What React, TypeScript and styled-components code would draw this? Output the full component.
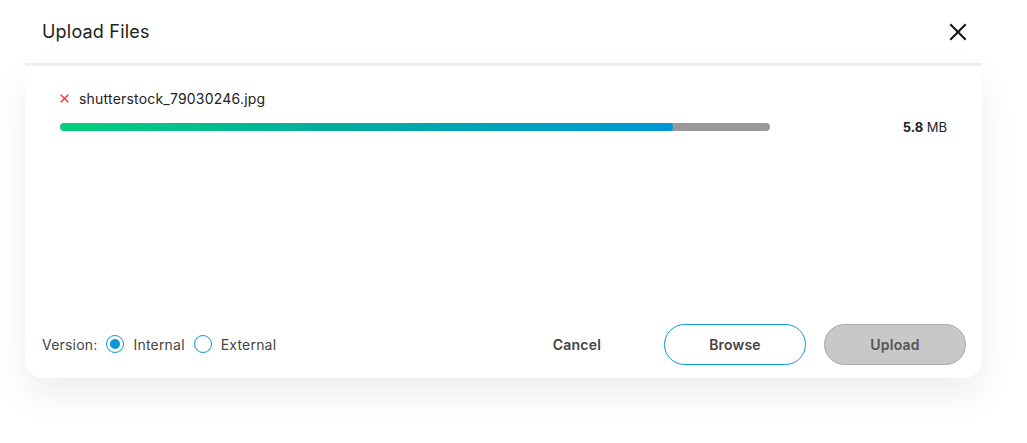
import React from 'react';
import styled, { createGlobalStyle } from 'styled-components';

const GlobalStyle = createGlobalStyle`
  html, body {
    margin: 0;
    padding: 0;
    background: #ffffff;
    font-family: Inter, "Open Sans", sans-serif;
  }
`;

const StyledPage = styled.div`
  width: 1027px;
  height: 443px;
  box-sizing: border-box;
  padding: 0 45px 0 25px;
  overflow: hidden;
`;

const StyledHeader = styled.div`
  height: 63px;
  display: flex;
  align-items: center;
  justify-content: space-between;
  padding: 0 15px 0 17px;
`;

const StyledTitle = styled.h1`
  margin: 0;
  font-size: 18px;
  font-weight: 400;
  color: #222222;
  letter-spacing: 0.2px;
`;

const StyledClose = styled.button`
  width: 18px;
  height: 18px;
  padding: 0;
  border: none;
  background: none;
  display: flex;
  cursor: pointer;
`;

const StyledCard = styled.div`
  height: 315px;
  box-sizing: border-box;
  border-top: 3px solid #eeeeee;
  border-radius: 0 0 18px 18px;
  background: #ffffff;
  box-shadow: 0 18px 36px rgba(0, 0, 0, 0.07);
  display: flex;
  flex-direction: column;
`;

const StyledFileList = styled.div`
  flex: 1;
  padding: 23px 35px 0 35px;
`;

const StyledFileName = styled.div`
  display: flex;
  align-items: center;
  gap: 10px;
  font-size: 14px;
  letter-spacing: 0.2px;
  color: #222222;
  height: 18px;
`;

const StyledProgressRow = styled.div`
  display: flex;
  align-items: center;
  justify-content: space-between;
  margin-top: 12px;
`;

const StyledTrack = styled.div`
  width: 710px;
  height: 8px;
  border-radius: 4px;
  background: #999999;
  overflow: hidden;
`;

const StyledFill = styled.div`
  height: 100%;
  border-radius: 4px;
  background: linear-gradient(90deg, #06cf7c 0%, #03ad9e 45%, #0097d8 100%);
`;

const StyledSize = styled.div`
  font-size: 13px;
  color: #222222;

  strong {
    font-weight: 700;
  }
`;

const StyledFooter = styled.div`
  height: 68px;
  display: flex;
  align-items: center;
  padding: 0 16px 0 17px;
`;

const StyledVersion = styled.div`
  display: flex;
  align-items: center;
  font-size: 14px;
  letter-spacing: 0.2px;
  color: #444444;
  flex: 1;
`;

const StyledRadioLabel = styled.label`
  display: flex;
  align-items: center;
  gap: 9px;
  margin-left: 9px;
  cursor: pointer;
`;

const StyledRadio = styled.span<{ $checked?: boolean }>`
  width: 18px;
  height: 18px;
  box-sizing: border-box;
  border: 1.5px solid #0b98d8;
  border-radius: 50%;
  display: flex;
  align-items: center;
  justify-content: center;

  &::after {
    content: '';
    width: 10px;
    height: 10px;
    border-radius: 50%;
    background: ${({ $checked }) => ($checked ? '#0b98d8' : 'transparent')};
  }
`;

const StyledCancel = styled.button`
  border: none;
  background: none;
  font-family: inherit;
  font-size: 14px;
  font-weight: 600;
  letter-spacing: 0.2px;
  color: #444444;
  padding: 0;
  margin-right: 63px;
  cursor: pointer;
`;

const StyledButton = styled.button<{ $primary?: boolean }>`
  width: 142px;
  height: 41px;
  border-radius: 21px;
  font-family: inherit;
  font-size: 14px;
  font-weight: 600;
  letter-spacing: 0.2px;
  color: ${({ $primary }) => ($primary ? '#555555' : '#444444')};
  background: ${({ $primary }) => ($primary ? '#c8c8c8' : '#ffffff')};
  border: 1px solid ${({ $primary }) => ($primary ? '#a9a9a9' : '#0b98d8')};
  cursor: pointer;

  & + & {
    margin-left: 18px;
  }
`;

const CloseIcon = () => (
  <svg width="18" height="18" viewBox="0 0 18 18" fill="none">
    <path d="M2 2L16 16M16 2L2 16" stroke="#111111" strokeWidth="2" strokeLinecap="square" />
  </svg>
);

const RemoveIcon = () => (
  <svg width="9" height="9" viewBox="0 0 9 9" fill="none">
    <path d="M0.6 0.6L8.4 8.4M8.4 0.6L0.6 8.4" stroke="#ee1c1c" strokeWidth="1.3" />
  </svg>
);

const App: React.FC = () => {
  const [version, setVersion] = React.useState('internal');
  const progress = 86.3;

  return (
    <StyledPage>
      <GlobalStyle />
      <StyledHeader>
        <StyledTitle>Upload Files</StyledTitle>
        <StyledClose aria-label="Close">
          <CloseIcon />
        </StyledClose>
      </StyledHeader>
      <StyledCard>
        <StyledFileList>
          <StyledFileName>
            <RemoveIcon />
            shutterstock_79030246.jpg
          </StyledFileName>
          <StyledProgressRow>
            <StyledTrack>
              <StyledFill style={{ width: `${progress}%` }} />
            </StyledTrack>
            <StyledSize>
              <strong>5.8</strong> MB
            </StyledSize>
          </StyledProgressRow>
        </StyledFileList>
        <StyledFooter>
          <StyledVersion>
            Version:
            <StyledRadioLabel onClick={() => setVersion('internal')}>
              <StyledRadio $checked={version === 'internal'} />
              Internal
            </StyledRadioLabel>
            <StyledRadioLabel onClick={() => setVersion('external')}>
              <StyledRadio $checked={version === 'external'} />
              External
            </StyledRadioLabel>
          </StyledVersion>
          <StyledCancel>Cancel</StyledCancel>
          <StyledButton>Browse</StyledButton>
          <StyledButton $primary>Upload</StyledButton>
        </StyledFooter>
      </StyledCard>
    </StyledPage>
  );
};

export default App;
